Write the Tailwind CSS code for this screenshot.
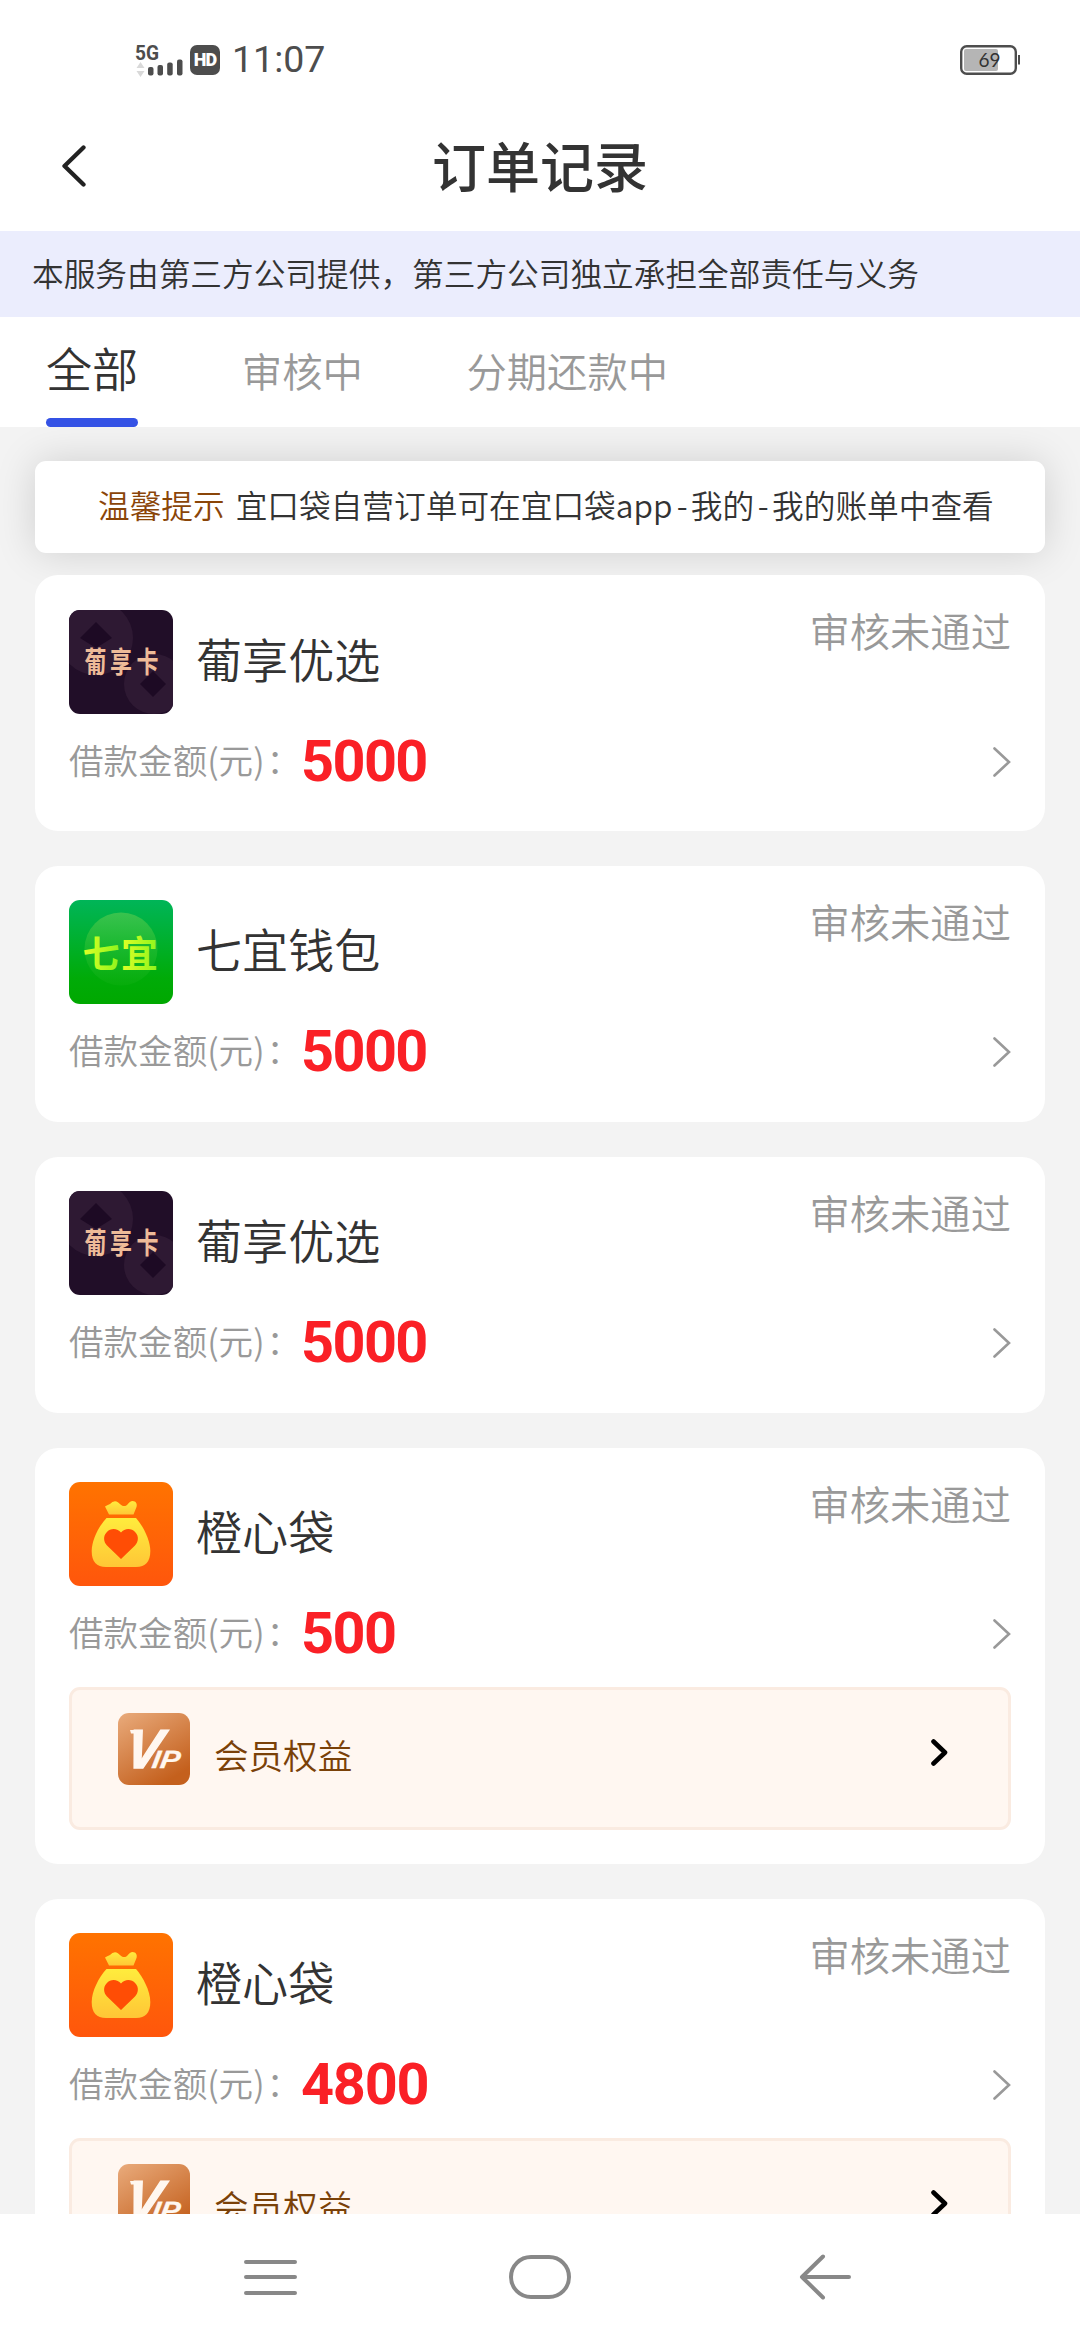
<!DOCTYPE html>
<html lang="zh-CN">
<head>
<meta charset="utf-8">
<title>订单记录</title>
<script src="https://cdn.jsdelivr.net/npm/@tailwindcss/browser@4"></script>
</head>
<body class="w-[1080px] h-[2340px] overflow-hidden bg-white font-['Noto_Sans_CJK_SC',sans-serif] font-[350] text-[#333] flex flex-col">

<svg class="absolute size-0">
  <defs>
    <linearGradient id="gGreen" x1="0" y1="0" x2="0" y2="1"><stop offset="0" stop-color="#00b558"/><stop offset=".75" stop-color="#00ab08"/><stop offset="1" stop-color="#00a800"/></linearGradient>
    <linearGradient id="gShine" x1="0" y1="0" x2="0" y2="1"><stop offset="0" stop-color="#4cc850"/><stop offset=".5" stop-color="#20bb30"/><stop offset="1" stop-color="#08ad0c"/></linearGradient>
    <linearGradient id="gLime" x1="0" y1="0" x2="1" y2="0"><stop offset="0" stop-color="#e2ff26"/><stop offset="1" stop-color="#8df51c"/></linearGradient>
    <linearGradient id="gOrange" x1="0" y1="0" x2="0" y2="1"><stop offset="0" stop-color="#ff7300"/><stop offset="1" stop-color="#ff560c"/></linearGradient>
    <linearGradient id="gBag" x1="0" y1="0" x2="0" y2="1"><stop offset="0" stop-color="#ffec3d"/><stop offset="1" stop-color="#ffc636"/></linearGradient>
    <linearGradient id="gVip" x1="0" y1="0" x2=".6" y2="1"><stop offset="0" stop-color="#e9ab7c"/><stop offset="1" stop-color="#c4601d"/></linearGradient>
  </defs>
  <symbol id="logo-card" viewBox="0 0 104 104">
    <rect width="104" height="104" fill="#210e28"/>
    <circle cx="27" cy="28" r="37" fill="#2e1933"/>
    <path d="M27 12 43 28 27 38 11 28Z" fill="#1d0a24"/>
    <circle cx="85" cy="74" r="30" fill="#2e1933"/>
    <path d="M84 61 97 74 84 87 71 74Z" fill="#1d0a24"/>
  </symbol>
  <symbol id="logo-wallet" viewBox="0 0 104 104">
    <rect width="104" height="104" fill="url(#gGreen)"/>
    <circle cx="52" cy="49" r="36.500" fill="url(#gShine)" opacity=".75"/>
  </symbol>
  <symbol id="logo-bag" viewBox="0 0 104 104">
    <rect width="104" height="104" fill="url(#gOrange)"/>
    <path d="M40 32.500 36 24.500Q38 23 41 22Q44 18.500 47.500 19.500C50 20.500 52 24.500 56 24C59 23.500 60 19 63.500 19C67 19 68.500 22 67.500 25L64.500 32.500Z" fill="url(#gBag)"/>
    <path d="M37.500 36H67C74 44 81.300 58 81.300 69Q81.300 85 67 85H37Q22.700 85 22.700 69C22.700 58 30 44 37.500 36Z" fill="url(#gBag)"/>
    <path d="M52 77 38 63.500C34.500 60 34 54 37.500 50.500C42 45.500 48.500 46.500 52 50.500C55.500 46.500 62 45.500 66.500 50.500C70 54 69.500 60 66 63.500Z" fill="#ff4d05"/>
  </symbol>
  <symbol id="chev" viewBox="0 0 18 30"><path d="M1.500 1.500 16 15 1.500 28.500" fill="none" stroke="#999" stroke-width="2.600" stroke-linecap="round"/></symbol>
  <symbol id="chev-bold" viewBox="0 0 17 27"><path d="M2.500 2.500 14 13.500 2.500 24.500" fill="none" stroke="#000" stroke-width="4.600" stroke-linecap="round" stroke-linejoin="round"/></symbol>
</svg>

<header class="h-[231px] shrink-0 flex flex-col">
  <div class="h-[120px] flex justify-between items-center pl-[135px] pr-[60px]">
    <div class="flex items-center">
      <svg class="w-[50px] h-[34px] overflow-visible" viewBox="0 0 50 34">
        <text x="0" y="16.500" font-family="Roboto" font-weight="700" font-size="20" textLength="24" lengthAdjust="spacingAndGlyphs" fill="#4d4d4d">5G</text>
        <path d="M5.500 19 9.500 25H1.500ZM5.500 34 9.500 28H1.500Z" fill="#d9d9d9"/>
        <g fill="#4d4d4d"><rect x="13" y="24" width="5.500" height="8.500" rx="2"/><rect x="22.500" y="22" width="5.500" height="10.500" rx="2"/><rect x="32.200" y="19.500" width="5.500" height="13" rx="2"/><rect x="42" y="16.500" width="5.500" height="16" rx="2"/></g>
      </svg>
      <span class="ml-[5px] w-[30px] h-[30px] rounded-[7px] bg-[#4d4d4d] text-white font-[Roboto] font-black text-[18px] leading-[30px] text-center tracking-[-1px]">HD</span>
      <span class="ml-[12px] font-[Roboto] font-normal text-[37.500px] leading-none text-[#4d4d4d]">11:07</span>
    </div>
    <svg class="w-[60px] h-[30px]" viewBox="0 0 60 30">
      <rect x="1.200" y="1.200" width="54.600" height="27.600" rx="5.500" fill="none" stroke="#4d4d4d" stroke-width="2.400"/>
      <rect x="4" y="4" width="34" height="22" rx="2" fill="#b5b5b5"/>
      <rect x="58" y="10" width="2" height="9.500" fill="#4d4d4d"/>
      <text x="29.500" y="22" text-anchor="middle" font-family="Lato" font-weight="400" font-size="19" fill="#333">69</text>
    </svg>
  </div>
  <div class="grid grid-cols-3 items-center h-[92px] px-[62px]">
    <svg class="w-6 h-[42px]" viewBox="0 0 24 42"><path d="M21.500 2.500 2.500 21 21.500 39.500" fill="none" stroke="#222" stroke-width="4.300" stroke-linecap="round" stroke-linejoin="round"/></svg>
    <h1 class="text-center font-medium text-[54px] leading-none whitespace-nowrap pb-[3px]">订单记录</h1>
  </div>
</header>

<div class="h-[86px] shrink-0 bg-[#ebedfd] px-[32px] pb-[2px] flex items-center text-[31.680px] leading-none whitespace-nowrap">本服务由第三方公司提供，第三方公司独立承担全部责任与义务</div>

<nav class="h-[110px] shrink-0 px-[46px] flex items-stretch gap-[103.680px] leading-none">
  <div class="flex flex-col justify-between pt-[27px] text-[46.080px]"><span>全部</span><span class="h-[9px] rounded-full bg-[#3452e5]"></span></div>
  <div class="pt-[33px] text-[40.320px] text-[#999]">审核中</div>
  <div class="pt-[33px] text-[40.320px] text-[#999]">分期还款中</div>
</nav>

<main class="h-[1787px] shrink-0 overflow-hidden bg-[#f3f3f3] px-[35px] pt-[34px] flex flex-col leading-none">
  <div class="h-[92px] shrink-0 rounded-[11px] bg-white shadow-[0_0_40px_rgba(0,0,0,0.15)] flex items-center pb-[4px] px-[63px] text-[31.680px] whitespace-nowrap">
    <span class="text-[#8a4508]">温馨提示</span>
    <span class="ml-[11px]">宜口袋自营订单可在宜口袋<span class="inline-block w-[58px]">app</span><span class="inline-block w-[17px] text-center">-</span>我的<span class="inline-block w-[18px] text-center">-</span>我的账单中查看</span>
  </div>

  <div class="mt-[22px] flex flex-col gap-[35px]">
    <section class="h-[256px] shrink-0 rounded-[23px] bg-white px-[34px] pt-[35px]">
      <div class="flex justify-between">
        <div class="flex items-center gap-[23px] h-[104px]">
          <svg class="size-[104px] rounded-[11px]" viewBox="0 0 104 104"><use href="#logo-card"/><g fill="#eebb98" font-weight="700" font-size="22" transform="translate(0 62.500) scale(1 1.320)"><text x="15.500">葡</text><text x="41">享</text><text x="67.500">卡</text></g></svg>
          <span class="text-[46.080px] pb-[7px]">葡享优选</span>
        </div>
        <span class="text-[40.320px] text-[#999]">审核未通过</span>
      </div>
      <div class="h-[96px] flex items-center"><span class="w-[232px] pb-[5px] text-[34.560px] text-[#999] whitespace-nowrap">借款金额(元)<span class="ml-[2px]">：</span></span><span class="font-[Roboto] font-bold text-[57.600px] tracking-[-1.600px] text-[#fa2026]">5000</span><svg class="ml-auto w-[18px] h-[30px]"><use href="#chev"/></svg></div>
    </section>

    <section class="h-[256px] shrink-0 rounded-[23px] bg-white px-[34px] pt-[34px]">
      <div class="flex justify-between">
        <div class="flex items-center gap-[23px] h-[104px]">
          <svg class="size-[104px] rounded-[11px]" viewBox="0 0 104 104"><use href="#logo-wallet"/><g fill="url(#gLime)" font-weight="700" font-size="37"><text x="13.500" y="67.500">七</text><text x="52" y="67.500">宜</text></g></svg>
          <span class="text-[46.080px] pb-[7px]">七宜钱包</span>
        </div>
        <span class="pt-px text-[40.320px] text-[#999]">审核未通过</span>
      </div>
      <div class="h-[96px] flex items-center"><span class="w-[232px] pb-[5px] text-[34.560px] text-[#999] whitespace-nowrap">借款金额(元)<span class="ml-[2px]">：</span></span><span class="font-[Roboto] font-bold text-[57.600px] tracking-[-1.600px] text-[#fa2026]">5000</span><svg class="ml-auto w-[18px] h-[30px]"><use href="#chev"/></svg></div>
    </section>

    <section class="h-[256px] shrink-0 rounded-[23px] bg-white px-[34px] pt-[34px]">
      <div class="flex justify-between">
        <div class="flex items-center gap-[23px] h-[104px]">
          <svg class="size-[104px] rounded-[11px]" viewBox="0 0 104 104"><use href="#logo-card"/><g fill="#eebb98" font-weight="700" font-size="22" transform="translate(0 62.500) scale(1 1.320)"><text x="15.500">葡</text><text x="41">享</text><text x="67.500">卡</text></g></svg>
          <span class="text-[46.080px] pb-[7px]">葡享优选</span>
        </div>
        <span class="pt-px text-[40.320px] text-[#999]">审核未通过</span>
      </div>
      <div class="h-[96px] flex items-center"><span class="w-[232px] pb-[5px] text-[34.560px] text-[#999] whitespace-nowrap">借款金额(元)<span class="ml-[2px]">：</span></span><span class="font-[Roboto] font-bold text-[57.600px] tracking-[-1.600px] text-[#fa2026]">5000</span><svg class="ml-auto w-[18px] h-[30px]"><use href="#chev"/></svg></div>
    </section>

    <section class="h-[416px] shrink-0 rounded-[23px] bg-white px-[34px] pt-[34px]">
      <div class="flex justify-between">
        <div class="flex items-center gap-[23px] h-[104px]"><svg class="size-[104px] rounded-[11px]"><use href="#logo-bag"/></svg><span class="text-[46.080px] pb-[7px]">橙心袋</span></div>
        <span class="pt-px text-[40.320px] text-[#999]">审核未通过</span>
      </div>
      <div class="h-[96px] flex items-center"><span class="w-[232px] pb-[5px] text-[34.560px] text-[#999] whitespace-nowrap">借款金额(元)<span class="ml-[2px]">：</span></span><span class="font-[Roboto] font-bold text-[57.600px] tracking-[-1.600px] text-[#fa2026]">500</span><svg class="ml-auto w-[18px] h-[30px]"><use href="#chev"/></svg></div>
      <div class="mt-[5px] h-[143px] rounded-[11px] border-[3px] border-[#faebe1] bg-[#fff7f1] pl-[46px] pr-[60px] pt-[23px] flex items-start">
        <svg class="size-[72px]" viewBox="0 0 72 72"><rect width="72" height="72" rx="11" fill="url(#gVip)"/><path d="M12 17H22V20.500H13Z" fill="#fff7f0"/><g fill="#fff7f0" stroke="#fff7f0" font-family="Liberation Sans" font-weight="700" font-style="italic" transform="translate(0 55) skewX(-9)"><text x="6" y="0" font-size="55" stroke-width="1.500" textLength="35" lengthAdjust="spacingAndGlyphs">V</text><text x="33" y="0" font-size="25" stroke-width=".3" textLength="28" lengthAdjust="spacingAndGlyphs">IP</text></g></svg>
        <span class="ml-[24px] mt-[24px] text-[34.560px] text-[#7a4108]">会员权益</span>
        <svg class="ml-auto mt-[26px] w-[17px] h-[27px]"><use href="#chev-bold"/></svg>
      </div>
    </section>

    <section class="h-[416px] shrink-0 rounded-[23px] bg-white px-[34px] pt-[34px]">
      <div class="flex justify-between">
        <div class="flex items-center gap-[23px] h-[104px]"><svg class="size-[104px] rounded-[11px]"><use href="#logo-bag"/></svg><span class="text-[46.080px] pb-[7px]">橙心袋</span></div>
        <span class="pt-px text-[40.320px] text-[#999]">审核未通过</span>
      </div>
      <div class="h-[96px] flex items-center"><span class="w-[232px] pb-[5px] text-[34.560px] text-[#999] whitespace-nowrap">借款金额(元)<span class="ml-[2px]">：</span></span><span class="font-[Roboto] font-bold text-[57.600px] tracking-[-1.200px] text-[#fa2026]">4800</span><svg class="ml-auto w-[18px] h-[30px]"><use href="#chev"/></svg></div>
      <div class="mt-[5px] h-[143px] rounded-[11px] border-[3px] border-[#faebe1] bg-[#fff7f1] pl-[46px] pr-[60px] pt-[23px] flex items-start">
        <svg class="size-[72px]" viewBox="0 0 72 72"><rect width="72" height="72" rx="11" fill="url(#gVip)"/><path d="M12 17H22V20.500H13Z" fill="#fff7f0"/><g fill="#fff7f0" stroke="#fff7f0" font-family="Liberation Sans" font-weight="700" font-style="italic" transform="translate(0 55) skewX(-9)"><text x="6" y="0" font-size="55" stroke-width="1.500" textLength="35" lengthAdjust="spacingAndGlyphs">V</text><text x="33" y="0" font-size="25" stroke-width=".3" textLength="28" lengthAdjust="spacingAndGlyphs">IP</text></g></svg>
        <span class="ml-[24px] mt-[24px] text-[34.560px] text-[#7a4108]">会员权益</span>
        <svg class="ml-auto mt-[26px] w-[17px] h-[27px]"><use href="#chev-bold"/></svg>
      </div>
    </section>
  </div>
</main>

<footer class="h-[126px] shrink-0 bg-white flex items-center pl-[244px]">
  <svg class="w-[53px] h-[46px]" viewBox="0 0 53 46" fill="none" stroke="#888" stroke-width="4" stroke-linecap="round"><path d="M2 8H51M2 23H51M2 39H51"/></svg>
  <svg class="ml-[212px] w-[62px] h-[46px]" viewBox="0 0 62 46"><rect x="2" y="3" width="58" height="40" rx="20" fill="none" stroke="#888" stroke-width="4"/></svg>
  <svg class="ml-[228px] w-[52px] h-[46px]" viewBox="0 0 52 46" fill="none" stroke="#888" stroke-width="4" stroke-linecap="round" stroke-linejoin="round"><path d="M24 2.500 3 23 24 43.500M3 23H50"/></svg>
</footer>
</body>
</html>
